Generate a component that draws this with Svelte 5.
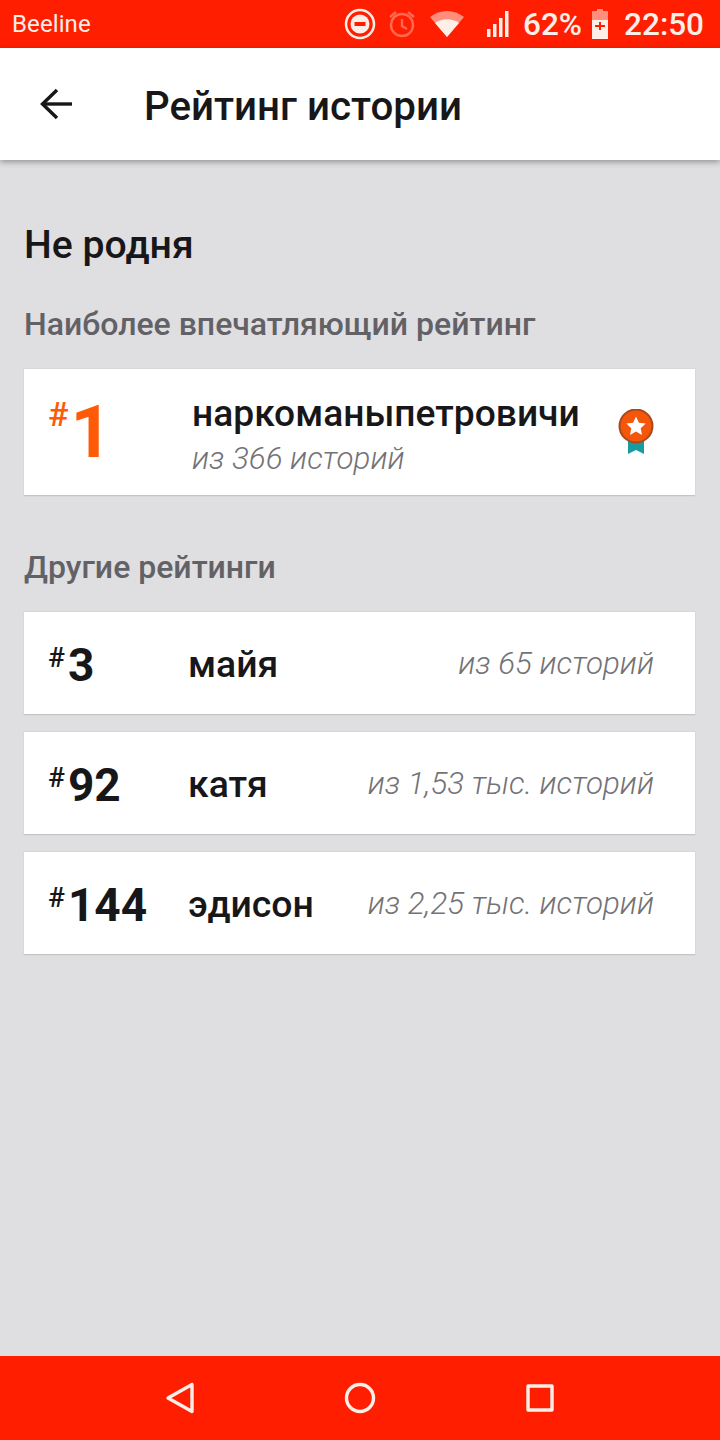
<script>
  const others = [
    { rank: 3, name: "майя", total: "из 65 историй" },
    { rank: 92, name: "катя", total: "из 1,53 тыс. историй" },
    { rank: 144, name: "эдисон", total: "из 2,25 тыс. историй" }
  ];
</script>

<div class="screen">
  <div class="status">
    <span class="carrier">Beeline</span>
    <div class="status-right">
      <svg class="ic-dnd" width="32" height="32" viewBox="0 0 32 32">
        <circle cx="16" cy="16" r="14" fill="none" stroke="#fdeee8" stroke-width="2.5" />
        <circle cx="16" cy="16" r="9.5" fill="#fdeee8" />
        <rect x="10.5" y="14" width="11" height="4" fill="#ff1f00" />
      </svg>
      <svg class="ic-alarm" width="30" height="30" viewBox="0 0 30 30" fill="none" stroke="#ff6a50" stroke-width="2.4">
        <circle cx="15" cy="16" r="11" />
        <path d="M15 10v7l5 3" />
        <path d="M3 8l6-5M27 8l-6-5" />
      </svg>
      <svg class="ic-wifi" width="34" height="26" viewBox="0 0 34 26">
        <path d="M0 6C10-2 24-2 34 6L17 26Z" fill="#ff8f7c" />
        <path d="M5 12C12 7 22 7 29 12L17 26Z" fill="#fdeee8" />
      </svg>
      <svg class="ic-signal" width="22" height="28" viewBox="0 0 22 28" fill="#fdeee8">
        <rect x="0" y="19" width="3.5" height="8" />
        <rect x="6" y="14" width="3.5" height="13" />
        <rect x="12" y="8" width="3.5" height="19" />
        <rect x="18" y="1" width="3.5" height="26" />
      </svg>
      <span class="pct">62%</span>
      <svg class="ic-batt" width="16" height="30" viewBox="0 0 16 30">
        <path d="M5 0h6v2h5v9H0V2h5Z" fill="#ff8f7c" />
        <rect x="0" y="11" width="16" height="19" fill="#fdeee8" />
        <path d="M7 13h2v3h4v2H9v3H7v-3H3v-2h4Z" fill="#ff1f00" />
      </svg>
      <span class="clock">22:50</span>
    </div>
  </div>

  <header class="bar">
    <svg class="back" width="34" height="32" viewBox="0 0 34 32" fill="none" stroke="#17171a" stroke-width="3.400">
      <path d="M33 16H3" />
      <path d="M18 2L3.500 16 18 30" />
    </svg>
    <h1>Рейтинг истории</h1>
  </header>

  <main class="content">
    <h2>Не родня</h2>
    <h3 class="first">Наиболее впечатляющий рейтинг</h3>

    <div class="card top">
      <div class="top-rank"><span class="hash">#</span><span class="num">1</span></div>
      <div class="top-text">
        <div class="top-name">наркоманыпетровичи</div>
        <div class="top-total">из 366 историй</div>
      </div>
      <svg class="medal" width="36" height="46" viewBox="0 0 36 46">
        <path d="M10 28h16v17l-8-4-8 4Z" fill="#1b9aa0" />
        <circle cx="18" cy="17" r="16.500" fill="#f4560a" stroke="#a8481e" stroke-width="2" />
        <path d="M18 7.500l2.900 6.300 6.800.8-5 4.700 1.300 6.700-6-3.400-6 3.400 1.300-6.700-5-4.700 6.800-.8Z" fill="#fff" />
      </svg>
    </div>

    <h3 class="second">Другие рейтинги</h3>

    <div class="list">
      {#each others as item}
        <div class="card row">
          <div class="rank"><span class="small-hash">#</span>{item.rank}</div>
          <div class="name">{item.name}</div>
          <div class="total">{item.total}</div>
        </div>
      {/each}
    </div>
  </main>

  <nav class="nav">
    <svg width="30" height="32" viewBox="0 0 30 32" fill="none" stroke="#fdeee8" stroke-width="3.400" stroke-linejoin="round">
      <path d="M27 2.500V29.500L3 16Z" />
    </svg>
    <svg class="home" width="32" height="32" viewBox="0 0 32 32" fill="none" stroke="#fdeee8" stroke-width="3.400">
      <circle cx="16" cy="16" r="13.500" />
    </svg>
    <svg width="28" height="28" viewBox="0 0 28 28" fill="none" stroke="#fdeee8" stroke-width="3.400" stroke-linejoin="round">
      <rect x="2" y="2" width="24" height="24" />
    </svg>
  </nav>
</div>

<style>
  :global(body) {
    margin: 0;
    background: #dfdee1;
  }

  .screen {
    width: 720px;
    height: 1440px;
    display: flex;
    flex-direction: column;
    font-family: Roboto, sans-serif;
    background: #dfdee1;
    color: #17171a;
    overflow: hidden;
  }

  .status {
    height: 48px;
    flex: none;
    background: #ff1f00;
    display: flex;
    align-items: center;
    justify-content: space-between;
    padding: 0 16px 0 12px;
    color: #fdeee8;
  }

  .carrier {
    font-size: 24px;
    letter-spacing: 0.1px;
  }

  .status-right {
    display: flex;
    align-items: center;
  }

  .ic-dnd {
    margin-right: 11px;
  }

  .ic-alarm {
    margin-right: 13px;
  }

  .ic-wifi {
    margin-right: 23px;
  }

  .ic-signal {
    margin-right: 14px;
  }

  .pct {
    font-size: 31.5px;
    font-weight: 500;
    margin-right: 10px;
  }

  .ic-batt {
    margin-right: 16px;
  }

  .clock {
    font-size: 31.5px;
    font-weight: 500;
  }

  .bar {
    height: 112px;
    flex: none;
    background: #fff;
    display: flex;
    align-items: center;
    padding-left: 39px;
    box-shadow: 0 2px 6px rgba(0, 0, 0, 0.35);
    position: relative;
  }

  .back {
    margin-right: 71px;
    flex: none;
  }

  h1 {
    margin: 4px 0 0;
    font-size: 40.3px;
    font-weight: 500;
  }

  .content {
    flex: 1;
    padding: 60px 25px 0 24px;
  }

  h2 {
    margin: 0;
    font-size: 39.2px;
    line-height: 50px;
    font-weight: 500;
  }

  h3 {
    margin: 0;
    font-size: 32px;
    line-height: 40px;
    font-weight: 500;
    color: #626166;
  }

  .first {
    margin-top: 34px;
    margin-bottom: 25px;
  }

  .second {
    margin-top: 51px;
    margin-bottom: 25px;
  }

  .card {
    background: #fff;
    border-bottom: 1px solid #c4c3c6;
    box-shadow: 0 0 1px rgba(0, 0, 0, 0.2);
    box-sizing: border-box;
    display: flex;
    align-items: center;
  }

  .top {
    height: 127px;
    padding-left: 24px;
  }

  .top-rank {
    width: 144px;
    flex: none;
    color: #ff5a06;
    display: flex;
    align-items: flex-start;
    height: 90px;
  }

  .hash {
    font-size: 34px;
    line-height: 40px;
    font-weight: 500;
    margin-top: 7px;
  }

  .num {
    font-size: 72px;
    line-height: 80px;
    font-weight: 700;
    margin-top: 6px;
    margin-left: 2px;
  }

  .top-text {
    flex: 1;
    min-width: 0;
    padding-top: 7px;
  }

  .top-name {
    font-size: 37.2px;
    line-height: 44px;
    font-weight: 500;
  }

  .top-total {
    font-size: 31.3px;
    line-height: 44px;
    font-weight: 300;
    font-style: italic;
    color: #737276;
    margin-top: 2px;
  }

  .medal {
    margin-right: 41px;
    flex: none;
  }

  .list {
    display: flex;
    flex-direction: column;
    gap: 17px;
  }

  .row {
    height: 103px;
    padding: 0 41px 0 24px;
  }

  .rank {
    width: 140px;
    flex: none;
    font-size: 46px;
    line-height: 54px;
    font-weight: 700;
    padding-top: 4px;
  }

  .small-hash {
    font-size: 28px;
    font-weight: 500;
    vertical-align: 14px;
    line-height: 0;
    margin-right: 3px;
  }

  .name {
    flex: 1;
    font-size: 37.4px;
    font-weight: 500;
    padding-top: 2px;
  }

  .total {
    font-size: 31.3px;
    font-weight: 300;
    font-style: italic;
    color: #737276;
  }

  .nav {
    height: 84px;
    flex: none;
    background: #ff1f00;
    display: flex;
    align-items: center;
    justify-content: space-between;
    padding: 0 166px 0 165px;
  }

  .home {
    margin-left: -2px;
  }
</style>
